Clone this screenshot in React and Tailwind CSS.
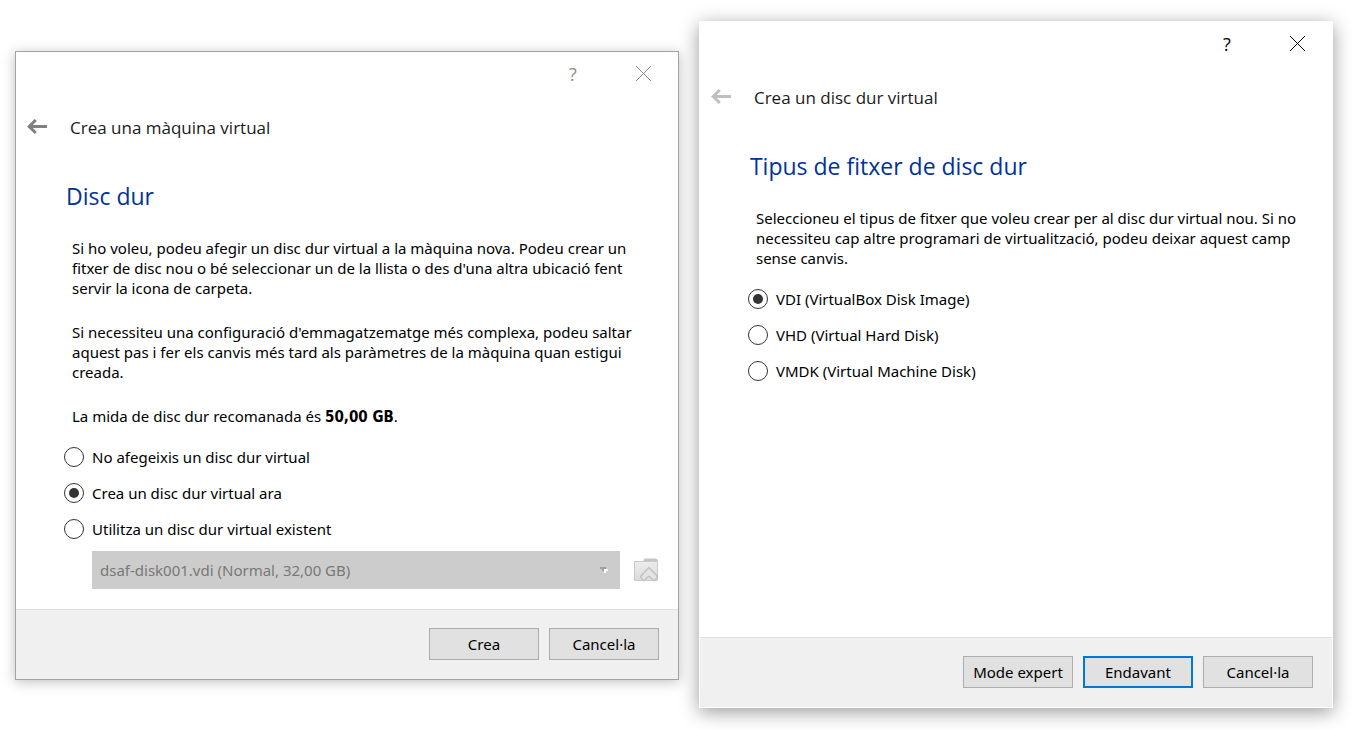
import React from "react";

function BackArrow() {
  return (
    <svg width="20" height="18" viewBox="0 0 20 18" fill="none" stroke="currentColor" strokeWidth="3" aria-hidden="true">
      <path d="M8.8 1 L2.2 7.5 L8.8 14 M2.2 7.5 H20" />
    </svg>
  );
}

function CloseIcon() {
  return (
    <svg width="16" height="16" viewBox="0 0 16 16" fill="none" stroke="currentColor" aria-hidden="true">
      <path d="M1 0 L16 15 M16 0 L1 15" />
    </svg>
  );
}

function FolderIcon() {
  return (
    <svg width="24" height="24" viewBox="0 0 24 24" aria-hidden="true">
      <defs>
        <linearGradient id="folder-face" x1="0" y1="0" x2="0" y2="1">
          <stop offset="0" stopColor="#ececec" />
          <stop offset="1" stopColor="#dcdcdc" />
        </linearGradient>
      </defs>
      <path d="M9 3.5 L10.5 0.5 H22 L23.8 2 V5 H9 Z" fill="#c6c6c6" />
      <path d="M0.5 3.5 H23.5 V22.5 H0.5 Z" fill="url(#folder-face)" stroke="#c8c8c8" />
      <path d="M15 9.5 L23.5 18.5 L20.5 22.8 L15 18 L9.5 22.8 L6.5 18.5 Z" fill="#e4e4e4" stroke="#c0c0c0" strokeWidth="1.3" />
    </svg>
  );
}

function Dialog({ title, heading, active, className, children, footer }) {
  const tone = active ? "text-black" : "text-[#8c8c8c]";
  const arrowTone = active ? "text-[#bfbfbf]" : "text-[#808080]";
  return (
    <section aria-label={title} className={`flex min-w-0 flex-col border bg-white ${className}`}>
      <div className={`flex h-11 justify-end font-['Open_Sans',sans-serif] text-lg leading-5 ${tone}`}>
        <button type="button" aria-label="Ajuda" className="flex w-[70px] items-center justify-center">?</button>
        <button type="button" aria-label="Tanca" className="flex w-[70px] items-center justify-center">
          <CloseIcon />
        </button>
      </div>
      <div className="flex h-16 items-center gap-[23px] pl-[11px]">
        <button type="button" aria-label="Enrere" disabled={active} className={arrowTone}>
          <BackArrow />
        </button>
        <h1 className="font-['Open_Sans',sans-serif] text-[17px] text-[#1a1a1a]">{title}</h1>
      </div>
      <div className="flex flex-1 flex-col pt-5 pr-5 pb-5 pl-12">
        <h2 className="pl-0.5 font-['Open_Sans',sans-serif] text-[23px] leading-8 text-[#003399]">{heading}</h2>
        {children}
      </div>
      <div className="flex justify-end gap-[10px] border-t border-[#dfdfdf] bg-[#f0f0f0] pt-[18px] pr-[19px] pb-[19px]">
        {footer}
      </div>
    </section>
  );
}

function Option({ name, label, defaultChecked }) {
  return (
    <label className="flex h-5 items-center gap-2">
      <input
        type="radio"
        name={name}
        defaultChecked={defaultChecked}
        className="size-5 shrink-0 appearance-none rounded-full border border-[#333] bg-clip-content p-1 checked:bg-[#333]"
      />
      {label}
    </label>
  );
}

function PushButton({ children, primary }) {
  const edge = primary ? "border-2 border-[#0078d7]" : "border border-[#adadad]";
  return (
    <button type="button" className={`h-8 w-[110px] bg-[#e1e1e1] whitespace-nowrap ${edge}`}>
      {children}
    </button>
  );
}

export default function App() {
  return (
    <main className="flex items-start gap-5 bg-white pt-[21px] pr-[19px] pb-[22px] pl-[15px] font-['Noto_Sans',sans-serif] text-[15px] leading-5 text-black">
      <Dialog
        title="Crea una màquina virtual"
        heading="Disc dur"
        className="mt-[30px] flex-[664] border-[#a3a3a3] shadow-[0_2px_12px_rgba(0,0,0,0.25)]"
        footer={
          <>
            <PushButton>Crea</PushButton>
            <PushButton>Cancel·la</PushButton>
          </>
        }
      >
        <div className="mt-[26px] flex flex-col gap-6 pl-2">
          <p>
            Si ho voleu, podeu afegir un disc dur virtual a la màquina nova. Podeu crear un fitxer de disc nou o bé
            seleccionar un de la llista o des d'una altra ubicació fent servir la icona de carpeta.
          </p>
          <p>
            Si necessiteu una configuració d'emmagatzematge més complexa, podeu saltar aquest pas i fer els canvis més
            tard als paràmetres de la màquina quan estigui creada.
          </p>
          <p>
            La mida de disc dur recomanada és{" "}
            <b className="font-['DejaVu_Sans_Condensed',sans-serif] leading-none">50,00 GB</b>.
          </p>
        </div>
        <div className="mt-[21px] flex flex-col gap-4">
          <Option name="disk" label="No afegeixis un disc dur virtual" />
          <Option name="disk" label="Crea un disc dur virtual ara" defaultChecked />
          <Option name="disk" label="Utilitza un disc dur virtual existent" />
        </div>
        <div className="mt-3 flex items-center gap-[14px] pl-7">
          <div className="relative flex-1">
            <select
              disabled
              aria-label="Disc dur virtual existent"
              className="block h-[38px] w-full appearance-none bg-[#cccccc] px-2 text-[#787878] opacity-100"
            >
              <option>dsaf-disk001.vdi (Normal, 32,00 GB)</option>
            </select>
            <svg className="absolute top-4 right-3" width="8" height="6" viewBox="0 0 8 6" aria-hidden="true">
              <path d="M4 2 H8 V4 H6 V6 H4 Z" fill="#fff" />
              <path d="M0 0 H6 V2 H4 V4 H2 V2 H0 Z" fill="#a0a0a0" />
            </svg>
          </div>
          <button type="button" disabled aria-label="Tria un fitxer de disc dur virtual">
            <FolderIcon />
          </button>
        </div>
      </Dialog>

      <Dialog
        title="Crea un disc dur virtual"
        heading="Tipus de fitxer de disc dur"
        active
        className="flex-[634] border-white shadow-[0_4px_18px_rgba(0,0,0,0.4)]"
        footer={
          <>
            <PushButton>Mode expert</PushButton>
            <PushButton primary>Endavant</PushButton>
            <PushButton>Cancel·la</PushButton>
          </>
        }
      >
        <p className="mt-[26px] pl-2">
          Seleccioneu el tipus de fitxer que voleu crear per al disc dur virtual nou. Si no necessiteu cap altre
          programari de virtualització, podeu deixar aquest camp sense canvis.
        </p>
        <div className="mt-[21px] mb-[236px] flex flex-col gap-4">
          <Option name="format" label="VDI (VirtualBox Disk Image)" defaultChecked />
          <Option name="format" label="VHD (Virtual Hard Disk)" />
          <Option name="format" label="VMDK (Virtual Machine Disk)" />
        </div>
      </Dialog>
    </main>
  );
}
